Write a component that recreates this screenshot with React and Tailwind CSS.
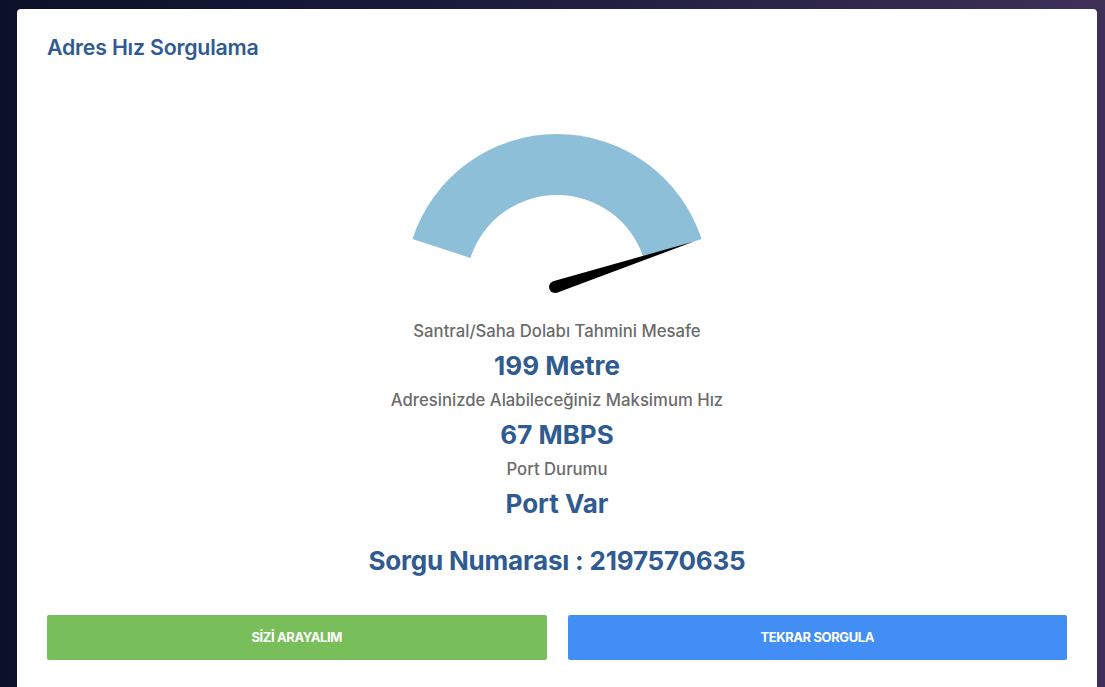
import React from "react";

const stats = [
  { label: "Santral/Saha Dolabı Tahmini Mesafe", value: "199 Metre" },
  { label: "Adresinizde Alabileceğiniz Maksimum Hız", value: "67 MBPS" },
  { label: "Port Durumu", value: "Port Var" },
];

const Gauge = () => (
  <svg viewBox="0 0 320 165" className="h-[165px] w-[320px]" aria-hidden="true">
    <path
      d="M 15.44 105.03 A 152 152 0 0 1 304.56 105.03 L 246.55 123.88 A 91 91 0 0 0 73.45 123.88 Z"
      fill="#8ebfd9"
    />
    <polygon points="159.9,158.7 156.1,147.3 297,107.5" fill="#000" />
    <circle cx="158" cy="153" r="6" fill="#000" />
  </svg>
);

export default function App() {
  return (
    <main
      className="h-screen overflow-hidden bg-gradient-to-r from-[#0a1129] via-[#1e1d3f] to-[#3f3058] pt-[9px] pl-[17px] pr-[8px]"
      style={{ fontFamily: "Inter, 'Noto Sans', sans-serif" }}
    >
      <div className="rounded-[4px] bg-white px-[30px] pt-[24px] pb-[40px]">
        <h1 className="text-[21.3px] leading-[28px] font-semibold tracking-[-0.2px] text-[#2f5b91]">
          Adres Hız Sorgulama
        </h1>

        <div className="mt-[73px] flex flex-col items-center">
          <Gauge />

          <div className="mt-[19px] flex flex-col items-center text-center">
            {stats.map((s) => (
              <React.Fragment key={s.label}>
                <p className="text-[16.7px] leading-[26px] font-medium text-[#6b6b6b]">
                  {s.label}
                </p>
                <p className="text-[26px] leading-[43px] font-bold text-[#2f5b91]">
                  {s.value}
                </p>
              </React.Fragment>
            ))}
            <p className="mt-[18px] text-[26px] leading-[36px] font-bold tracking-[-0.2px] text-[#2f5b91]">
              Sorgu Numarası : 2197570635
            </p>
          </div>
        </div>

        <div className="mt-[36px] grid grid-cols-2 gap-[21px]">
          <button className="h-[45px] rounded-[2px] bg-[#78be5a] text-[13px] font-bold tracking-[-0.4px] text-white">
            SİZİ ARAYALIM
          </button>
          <button className="h-[45px] rounded-[2px] bg-[#428ef4] text-[13px] font-bold tracking-[-0.4px] text-white">
            TEKRAR SORGULA
          </button>
        </div>
      </div>
    </main>
  );
}
